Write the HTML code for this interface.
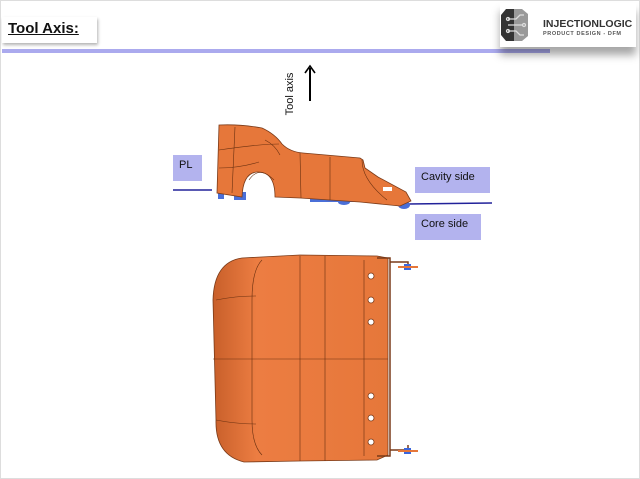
<!DOCTYPE html>
<html><head><meta charset="utf-8"><style>
body{margin:0;width:640px;height:479px;background:#fff;position:relative;overflow:hidden;font-family:"Liberation Sans",sans-serif}
.b{position:absolute}
.lbl{position:absolute;background:#b3b3ee;font-size:11px;color:#111;box-sizing:border-box;padding:4px 6px}
</style></head><body>
<div class="b" style="left:0;top:0;width:640px;height:479px;border:1px solid #ddd;box-sizing:border-box"></div>
<div class="b" style="left:2px;top:17px;width:95px;height:26px;background:#fff;box-shadow:1px 2px 3px rgba(0,0,0,.3)"></div>
<div class="b" style="left:8px;top:20px;font-weight:bold;font-size:15px;text-decoration:underline;color:#111">Tool Axis:</div>
<div class="b" style="left:2px;top:49px;width:548px;height:4px;background:#abaaee"></div>
<div class="b" style="left:500px;top:3px;width:136px;height:44px;background:#fff;box-shadow:0 8px 8px rgba(0,0,0,.35)"></div>
<svg class="b" style="left:500px;top:8px" width="30" height="34" viewBox="0 0 30 34">
<path d="M6 1h8v32H6L1 27V7z" fill="#333"/><path d="M14 1h8l6 5v22l-6 5h-8z" fill="#999"/>
<g stroke="#ddd" stroke-width="1.3" fill="none"><path d="M8 11h8l4-4h4M8 17h14M8 23h8l4 4h4"/><circle cx="8" cy="11" r="1.5"/><circle cx="8" cy="23" r="1.5"/><circle cx="24" cy="17" r="1.5"/></g></svg>
<div class="b" style="left:543px;top:18px;font-weight:bold;font-size:10.5px;color:#333">INJECTIONLOGIC</div>
<div class="b" style="left:543px;top:31px;font-size:5.5px;color:#555;letter-spacing:.6px;font-weight:bold">PRODUCT DESIGN - DFM</div>
<div class="b" style="left:260px;top:88px;transform:rotate(-90deg);transform-origin:center;width:60px;text-align:center;font-size:11px;color:#111">Tool axis</div>
<svg class="b" style="left:303px;top:64px" width="14" height="38"><path d="M7 37V4" stroke="#000" stroke-width="2"/><path d="M2 9L7 2l5 7" stroke="#000" stroke-width="1.6" fill="none"/></svg>
<div class="lbl" style="left:173px;top:155px;width:29px;height:26px">PL</div>
<div class="lbl" style="left:415px;top:167px;width:75px;height:26px">Cavity side</div>
<div class="lbl" style="left:415px;top:214px;width:66px;height:26px">Core side</div>
<svg class="b" style="left:0;top:0" width="640" height="479">
<defs><linearGradient id="g" x1="0" x2="1"><stop offset="0" stop-color="#c85f2a"/><stop offset=".25" stop-color="#ec7d42"/><stop offset="1" stop-color="#e6773a"/></linearGradient></defs>
<line x1="173" y1="190" x2="212" y2="190" stroke="#22229a" stroke-width="1.5"/>
<line x1="408" y1="204" x2="492" y2="203" stroke="#22229a" stroke-width="1.5"/>
<g fill="#4a6fd8"><rect x="218" y="190" width="6" height="9"/><rect x="234" y="192" width="12" height="8"/><rect x="310" y="197" width="50" height="5"/><ellipse cx="344" cy="202" rx="6" ry="3"/><ellipse cx="404" cy="205" rx="6" ry="4"/></g>
<path d="M219 125Q240 124 262 128Q275 134 282 144Q290 152 303 153L360 158L363 160L365 168L378 177L406 192L411 201L400 206L360 202L300 198L275 197Q275 172 258 172Q243 172 242 197L217 193Z" fill="#e6773a" stroke="#7a3a18" stroke-width=".8"/>
<g stroke="#6a3010" stroke-width=".6" fill="none"><path d="M235 127l-3 66M219 150q40-6 60-6M219 168q20 0 40-6M265 140q10 5 15 15M300 153l1 45M330 157v43M362 160q0 20 25 40M249 180q10-15 25 0"/></g>
<rect x="383" y="187" width="9" height="4" fill="#fff"/>
<path d="M242 258L300 255L377 256L388 258L388 455L377 460L300 461L244 462Q215 455 216 420L213 300Q214 262 242 258Z" fill="url(#g)" stroke="#7a3a18" stroke-width=".8"/>
<g stroke="#6a3010" stroke-width=".6" fill="none"><path d="M262 260q-10 10-10 40v120q0 25 10 35M300 256v205M325 256v205M213 359h175M216 300q20-4 40-4M216 420q20 4 40 4M364 260v196"/></g>
<g stroke="#7a3a18" stroke-width="1.5" fill="none"><path d="M377 258h13v198h-13M390 262h18v5M390 450h18v-5"/></g>
<g fill="#fff" stroke="#7a3a18" stroke-width=".8"><circle cx="371" cy="276" r="3"/><circle cx="371" cy="300" r="3"/><circle cx="371" cy="322" r="3"/><circle cx="371" cy="396" r="3"/><circle cx="371" cy="418" r="3"/><circle cx="371" cy="442" r="3"/></g>
<g fill="#3a66dd"><rect x="404" y="264" width="7" height="6"/><rect x="404" y="448" width="7" height="6"/></g>
<g stroke="#e6773a" stroke-width="2"><path d="M398 267h20M398 451h20"/></g>
</svg>
</body></html>
